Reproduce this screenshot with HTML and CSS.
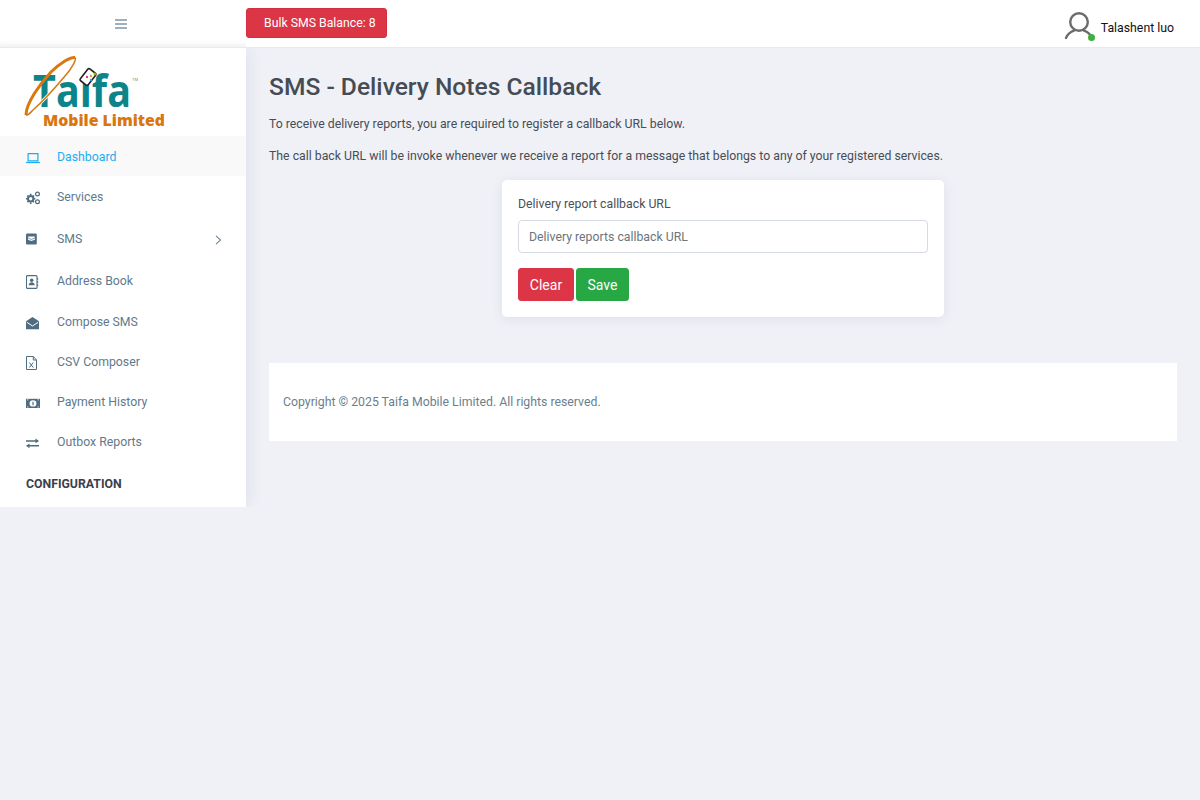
FILE: index.html
```html
<!DOCTYPE html>
<html lang="en">
<head>
<meta charset="utf-8">
<title>SMS - Delivery Notes Callback</title>
<link rel="stylesheet" href="styles.css">
</head>
<body>
<header class="topbar">
  <div class="topbar-left">
    <svg class="burger" width="12" height="10" viewBox="0 0 12 10"><path d="M0 1h12M0 5h12M0 9h12" stroke="#7f97a8" stroke-width="1.4"/></svg>
  </div>
  <div class="balance">Bulk SMS Balance: 8</div>
  <div class="user">
    <span class="avatar">
      <svg width="30" height="30" viewBox="0 0 30 30" fill="none" stroke="#6c6c6c" stroke-width="2.4" stroke-linecap="round"><circle cx="15" cy="11" r="8.800"/><path d="M2 27c2-4.500 5.500-6.500 8-7.300M28 27c-2-4.500-5.500-6.500-8-7.300"/></svg>
      <i class="online"></i>
    </span>
    <span class="user-name">Talashent luo</span>
  </div>
</header>
<div class="layout">
  <aside class="sidebar">
    <div class="logo">
      <svg width="160" height="88" viewBox="0 0 160 88">
        <text class="logo-taifa" x="18" y="59" textLength="98" lengthAdjust="spacingAndGlyphs">Taifa</text>
        <path d="M18 62C27 54 40 40 50 28C57 20 62 11 60 9.500" fill="none" stroke="#fff" stroke-width="3"/>
        <path d="M11 67C11 55 25 36 36 24C45 15 55 9 60 9.500" fill="none" stroke="#d9780f" stroke-width="3"/>
        <path d="M11 67C13 68 15 65 18 62C27 54 40 40 50 28C57 20 62 11 60 9.500" fill="none" stroke="#d9780f" stroke-width="1.500"/>
        <g transform="rotate(38 73 29)"><rect x="68" y="21.500" width="10" height="15" rx="1.500" fill="#fff" stroke="#222" stroke-width="1.600"/></g>
        <circle cx="72" cy="29" r="1.200" fill="#e83e8c"/><circle cx="76" cy="28" r="1.200" fill="#f0a020"/><circle cx="80" cy="26" r="1.400" fill="#7ab800"/><circle cx="76" cy="32" r="1.200" fill="#22a7e0"/>
        <text class="logo-tm" x="117" y="33">TM</text>
        <text class="logo-mobile" x="28" y="78" textLength="122" lengthAdjust="spacingAndGlyphs">Mobile Limited</text>
      </svg>
    </div>
    <nav class="nav">
      <a class="nav-item active">
        <svg class="nav-icon" width="14" height="14" viewBox="0 0 14 14"><path d="M2.100 2.600h9.800v7.200H2.100z" fill="none" stroke="currentColor" stroke-width="1.200"/><path d="M0 10.900h14v1.200H0z" fill="currentColor"/></svg>
        <span>Dashboard</span>
      </a>
      <a class="nav-item">
        <svg class="nav-icon" width="14" height="14" viewBox="0 0 14 14"><circle cx="4.700" cy="7.800" r="2.700" fill="none" stroke="currentColor" stroke-width="2"/><path d="M4.700 2.700v1.400M4.700 11.500v1.400M0 7.800h1.400M8 7.800h1.400M1.400 4.500l1 1M7 10.100l1 1M1.400 11.100l1-1M7 5.500l1-1" stroke="currentColor" stroke-width="1.600"/><circle cx="11.500" cy="3" r="1.900" fill="none" stroke="currentColor" stroke-width="1.200"/><circle cx="11.500" cy="10.800" r="1.900" fill="none" stroke="currentColor" stroke-width="1.200"/></svg>
        <span>Services</span>
      </a>
      <a class="nav-item nav-sms">
        <svg class="nav-icon nav-icon-up" width="14" height="14" viewBox="0 0 14 14"><rect x="0" y="1.500" width="10.800" height="11" rx="1.300" fill="currentColor"/><path d="M2 4.500h6.800v3.300L5.400 9 2 7.800z" fill="#fff"/><path d="M2 5.800 5.400 7.600l3.400-1.800" fill="none" stroke="currentColor" stroke-width=".7"/></svg>
        <span>SMS</span>
        <svg class="chevron" width="7" height="10" viewBox="0 0 7 10"><path d="M1 .8 5.500 5 1 9.200" fill="none" stroke="#6e8898" stroke-width="1.100"/></svg>
      </a>
      <a class="nav-item">
        <svg class="nav-icon" width="14" height="14" viewBox="0 0 14 14"><rect x=".5" y=".6" width="10.500" height="12.800" rx="1" fill="none" stroke="currentColor" stroke-width="1.100"/><circle cx="5.700" cy="5.200" r="1.800" fill="currentColor"/><path d="M2.700 10.300c0-2.100 1.500-3 3-3s3 .9 3 3z" fill="currentColor"/><path d="M11.700 2.800v2M11.700 6v2M11.700 9.200v2" stroke="currentColor" stroke-width=".9"/></svg>
        <span>Address Book</span>
      </a>
      <a class="nav-item">
        <svg class="nav-icon" width="14" height="14" viewBox="0 0 14 14"><path d="M0 5.300 6.500 1 13 5.300v7.900H0z" fill="currentColor"/><path d="M.8 6.300 6.500 10l5.700-3.700" fill="none" stroke="#fff" stroke-width="1"/></svg>
        <span>Compose SMS</span>
      </a>
      <a class="nav-item">
        <svg class="nav-icon" width="14" height="14" viewBox="0 0 14 14"><path d="M.5.500h6.800L10.500 4v9.500H.5zM7.300.500V4h3.200" fill="none" stroke="currentColor" stroke-width="1"/><path d="M3.400 6.500l3.800 5M7.200 6.500l-3.800 5" stroke="currentColor" stroke-width="1"/></svg>
        <span>CSV Composer</span>
      </a>
      <a class="nav-item">
        <svg class="nav-icon" width="14" height="14" viewBox="0 0 14 14"><path d="M0 2.800h14V12H0z" fill="currentColor"/><ellipse cx="7" cy="7.400" rx="3.400" ry="3.200" fill="#fff"/><path d="M7 5.700v3.500" stroke="currentColor" stroke-width="1.200"/><path d="M1 3.800h1.500M11.500 3.800H13M1 11h1.500M11.500 11H13" stroke="#fff" stroke-width=".7"/></svg>
        <span>Payment History</span>
      </a>
      <a class="nav-item">
        <svg class="nav-icon" width="14" height="14" viewBox="0 0 14 14"><path d="M0 5h12M1.500 9.700H13" stroke="currentColor" stroke-width="1.400"/><path d="M9.500 2.500 13 5l-3.500 2.200zM3.500 7.500 0 9.700l3.500 2.500z" fill="currentColor"/></svg>
        <span>Outbox Reports</span>
      </a>
      <div class="nav-title">CONFIGURATION</div>
    </nav>
  </aside>
  <main class="content">
    <h1 class="page-title">SMS - Delivery Notes Callback</h1>
    <p class="intro">To receive delivery reports, you are required to register a callback URL below.</p>
    <p class="intro">The call back URL will be invoke whenever we receive a report for a message that belongs to any of your registered services.</p>
    <form class="card">
      <label class="field-label" for="url">Delivery report callback URL</label>
      <input class="field-input" id="url" type="text" placeholder="Delivery reports callback URL">
      <div class="actions">
        <button class="btn btn-danger" type="button">Clear</button>
        <button class="btn btn-success" type="button">Save</button>
      </div>
    </form>
    <footer class="footer">Copyright © 2025 Taifa Mobile Limited. All rights reserved.</footer>
  </main>
</div>
</body>
</html>
```
FILE: styles.css
```css
* { box-sizing: border-box; }
html, body { height: 100%; }
body {
  margin: 0;
  background: #f0f1f7;
  font-family: Roboto, "Liberation Sans", sans-serif;
  font-size: 12.290px;
  color: #474d54;
  overflow: hidden;
}
.topbar {
  height: 48px;
  display: flex;
  align-items: center;
  background: #fff;
  border-bottom: 1px solid #e9eaef;
}
.topbar-left {
  width: 246px;
  height: 47px;
  display: flex;
  align-items: center;
  justify-content: center;
  padding-right: 4px;
  box-shadow: inset 0 -6px 6px -5px rgba(60, 70, 90, .12);
}
.burger { display: block; }
.balance {
  width: 141px;
  height: 30px;
  margin-top: -1px;
  padding-left: 17px;
  display: flex;
  align-items: center;
  background: #dc3545;
  border: 1px solid #d32f40;
  border-radius: 3px;
  color: #fff;
  white-space: nowrap;
}
.user {
  margin-left: auto;
  padding-right: 26px;
  display: flex;
  align-items: center;
  gap: 6px;
  color: #111;
}
.avatar { position: relative; display: block; width: 30px; height: 30px; margin-top: 4px; margin-right: 1px; }
.avatar svg { display: block; }
.online {
  position: absolute;
  right: -1px;
  bottom: 0;
  width: 7px;
  height: 7px;
  border-radius: 50%;
  background: #3fb03f;
}
.user-name { margin-top: 8px; }
.layout { display: flex; align-items: flex-start; }
.sidebar {
  width: 246px;
  height: 459px;
  flex: none;
  overflow: hidden;
  background: #fff;
  box-shadow: 3px 0 14px rgba(70, 80, 110, .09);
  clip-path: inset(0 -24px 0 0);
}
.logo { height: 88px; padding-left: 15px; }
.logo svg { display: block; }
.logo-taifa {
  font-family: "Open Sans", "Liberation Sans", sans-serif;
  font-weight: 700;
  font-size: 45px;
  fill: #0d8489;
}
.logo-mobile {
  font-family: "Open Sans", "Liberation Sans", sans-serif;
  font-weight: 800;
  font-size: 16.500px;
  fill: #d9760f;
}
.logo-tm { font-size: 4px; fill: #888; }
.nav { display: flex; flex-direction: column; }
.nav-item {
  height: 40.300px;
  padding-left: 26px;
  display: flex;
  align-items: center;
  color: #5f7a8c;
}
.nav-item span { margin-left: 17px; margin-top: 1px; }
.nav-icon { flex: none; color: #4e6d80; margin-top: 3px; }
.nav-icon-up { margin-top: 0; }
.nav-item.active { background: #f9f9fa; color: #1eaef0; }
.nav-item.active .nav-icon { color: #1eaef0; }
.nav-sms { height: 44px; }
.nav-sms span { margin-top: 0; }
.chevron { margin-left: auto; margin-right: 24px; margin-top: 3px; }
.nav-title {
  padding: 15px 0 0 26px;
  font-weight: 700;
  color: #3a404b;
}
.content { flex: 1; min-width: 0; padding: 0 23px; }
.page-title {
  margin: 22px 0 0;
  font-size: 24.600px;
  line-height: 34px;
  font-weight: 500;
  color: #454c53;
}
.intro { margin: 13px 0 0; line-height: 19px; }
.page-title + .intro { margin-top: 11px; }
.card {
  width: 442px;
  height: 137px;
  margin: 14px 0 0 233px;
  padding: 16px 16px 15px;
  background: #fff;
  border-radius: 5px;
  box-shadow: 0 2px 12px rgba(70, 80, 110, .1);
}
.field-label { display: block; line-height: 17px; color: #4a5057; }
.field-input {
  display: block;
  width: 100%;
  height: 33px;
  margin-top: 7px;
  padding: 1px 10px 0;
  background: #fff;
  border: 1px solid #d5d9e2;
  border-radius: 4px;
  font: 12.290px Roboto, "Liberation Sans", sans-serif;
  color: #3e444b;
}
.field-input::placeholder { color: #6c757d; opacity: 1; }
.actions { display: flex; gap: 2px; margin-top: 15px; }
.btn {
  height: 33px;
  padding: 0;
  border-radius: 3px;
  color: #fff;
  font: 14px Roboto, "Liberation Sans", sans-serif;
}
.btn-danger { width: 56px; background: #dc3545; border: 1px solid #dc3545; }
.btn-success { width: 53px; background: #28a745; border: 1px solid #28a745; }
.footer {
  height: 78px;
  margin-top: 46px;
  padding-left: 14px;
  display: flex;
  align-items: center;
  background: #fff;
  color: #6a7f8e;
}
```
